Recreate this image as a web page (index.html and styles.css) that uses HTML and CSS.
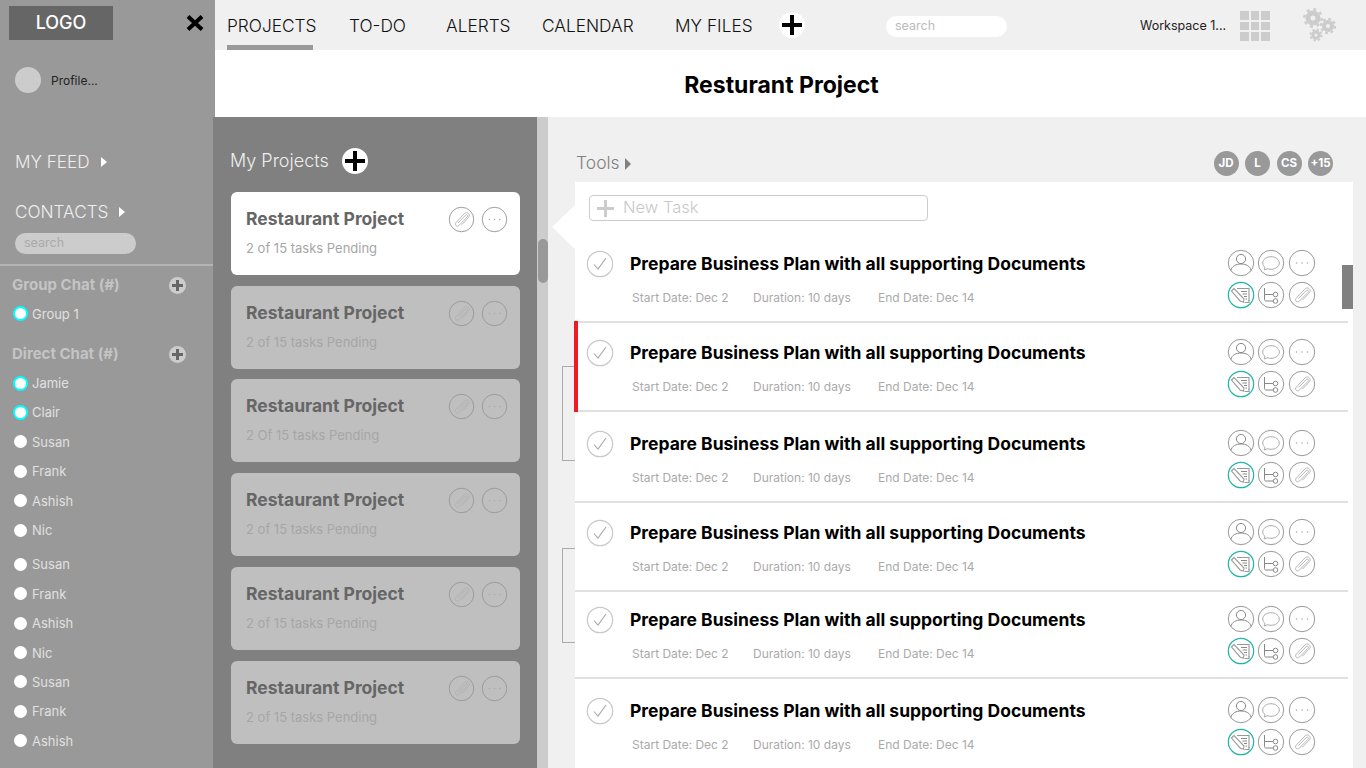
FILE: index.html
```html
<!DOCTYPE html>
<html lang="en">
<head>
    <meta charset="UTF-8">
    <title>Resturant Project</title>
    <link rel="stylesheet" href="styles.css">
</head>
<body>
    <svg class="sprite" width="0" height="0">
        <symbol id="i-check" viewBox="0 0 28 28"><circle cx="14" cy="14" r="12.7" fill="none" stroke="#c9c9c9" stroke-width="1.2"/><path d="M8 14.500l4 4.500 8-11" fill="none" stroke="#a8a8a8" stroke-width="1.1"/></symbol>
        <symbol id="i-person" viewBox="0 0 28 28"><circle cx="14" cy="14" r="12.7" fill="none" stroke="#999" stroke-width="1"/><circle cx="14" cy="10" r="4.600" fill="none" stroke="#888" stroke-width="1"/><path d="M3.800 21.500c1.200-4.500 5.200-6.500 10.200-6.500s9 2 10.200 6.500" fill="none" stroke="#888" stroke-width="1"/></symbol>
        <symbol id="i-chat" viewBox="0 0 28 28"><circle cx="14" cy="14" r="12.7" fill="none" stroke="#999" stroke-width="1"/><path d="M8 18.500c-1.500-1.200-2.300-2.800-2.300-4.500 0-3.500 3.700-6.300 8.300-6.300s8.300 2.800 8.300 6.300-3.700 6.300-8.300 6.300c-1.300 0-2.500-.2-3.600-.6l-3.200 1.300z" fill="none" stroke="#aaa" stroke-width="1"/></symbol>
        <symbol id="i-dots" viewBox="0 0 28 28"><circle cx="14" cy="14" r="12.700" fill="none" stroke="#999" stroke-width="1"/><circle cx="8.500" cy="14" r=".8" fill="#aaa"/><circle cx="14" cy="14" r=".8" fill="#aaa"/><circle cx="19.500" cy="14" r=".8" fill="#aaa"/></symbol>
        <symbol id="i-edit" viewBox="0 0 28 28"><circle cx="14" cy="14" r="12.700" fill="none" stroke="#1fb5a6" stroke-width="1.200"/><path d="M10 7.500h12v12.500" fill="none" stroke="#999" stroke-width="1.100"/><path d="M14 10.500h6M15.500 13h4.500M17 15.500h3M18.500 18h1.500" stroke="#888" stroke-width="1"/><path d="M4.500 10l2.500-2.500 10 10.500-.5 3-3.200-.8z" fill="#fff" stroke="#999" stroke-width="1.100"/><path d="M17.500 21.500h4.500v-2.500" fill="none" stroke="#999" stroke-width="1.100"/></symbol>
        <symbol id="i-flow" viewBox="0 0 28 28"><circle cx="14" cy="14" r="12.700" fill="none" stroke="#999" stroke-width="1"/><path d="M7.500 7v11.500c0 1 .5 1.500 1.500 1.500h7M7.500 13.500h8.500" fill="none" stroke="#888" stroke-width="1"/><circle cx="18.500" cy="13.500" r="2.300" fill="none" stroke="#888" stroke-width="1"/><circle cx="18.500" cy="20" r="2.300" fill="none" stroke="#888" stroke-width="1"/></symbol>
        <symbol id="i-clip" viewBox="0 0 28 28"><circle cx="14" cy="14" r="12.700" fill="none" stroke="#999" stroke-width="1"/><path d="M10.500 17.500l7.800-8c1.200-1.200 3 .3 1.800 1.700l-8.800 9c-2.200 2-5-.8-3.100-3l8.800-9.300c3-2.800 7 1.200 4.300 4l-7 7.400" fill="none" stroke="#b0b0b0" stroke-width=".9"/></symbol>
    </svg>

    <aside class="sidebar">
        <div class="logo-row">
            <div class="logo">LOGO</div>
            <svg class="close-x" width="18" height="16" viewBox="0 0 18 16"><path d="M2 1.500l14 13M16 1.500l-14 13" stroke="#000" stroke-width="4"/></svg>
        </div>
        <div class="profile">
            <span class="profile-pic"></span>
            <span>Profile...</span>
        </div>
        <a class="side-link side-link-feed">MY FEED <i class="arrow"></i></a>
        <a class="side-link side-link-contacts">CONTACTS <i class="arrow"></i></a>
        <div class="side-search">search</div>
        <div class="side-divider"></div>

        <div class="chat-head">
            <span>Group Chat (#)</span>
            <span class="small-plus"></span>
        </div>
        <ul class="chat-list">
            <li class="online">Group 1</li>
        </ul>

        <div class="chat-head chat-head-direct">
            <span>Direct Chat (#)</span>
            <span class="small-plus"></span>
        </div>
        <ul class="chat-list">
            <li class="online">Jamie</li>
            <li class="online">Clair</li>
            <li>Susan</li>
            <li>Frank</li>
            <li>Ashish</li>
            <li>Nic</li>
        </ul>
        <ul class="chat-list chat-list-more">
            <li>Susan</li>
            <li>Frank</li>
            <li>Ashish</li>
            <li>Nic</li>
            <li>Susan</li>
            <li>Frank</li>
            <li>Ashish</li>
        </ul>
    </aside>

    <div class="content">
        <header class="topbar">
            <nav class="nav">
                <a class="nav-item active">PROJECTS</a>
                <a class="nav-item">TO-DO</a>
                <a class="nav-item">ALERTS</a>
                <a class="nav-item">CALENDAR</a>
                <a class="nav-item">MY FILES</a>
                <span class="big-plus"></span>
            </nav>
            <div class="top-search">search</div>
            <div class="workspace">Workspace 1...</div>
            <div class="apps">
                <span></span><span></span><span></span>
                <span></span><span></span><span></span>
                <span></span><span></span><span></span>
            </div>
            <svg class="gears" width="34" height="34" viewBox="0 0 34 34">
                <circle cx="10" cy="10" r="8.700" fill="none" stroke="#ccc" stroke-width="2.400" stroke-dasharray="3 3.830"/>
                <circle cx="10" cy="10" r="5" fill="none" stroke="#ccc" stroke-width="5"/>
                <circle cx="25" cy="18" r="7" fill="none" stroke="#ccc" stroke-width="2.200" stroke-dasharray="2.800 2.700"/>
                <circle cx="25" cy="18" r="4" fill="none" stroke="#ccc" stroke-width="4"/>
                <circle cx="13" cy="27" r="5.500" fill="none" stroke="#ccc" stroke-width="2" stroke-dasharray="2.200 2.120"/>
                <circle cx="13" cy="27" r="3.100" fill="none" stroke="#ccc" stroke-width="3.200"/>
            </svg>
        </header>
        <div class="title-band"><h1>Resturant Project</h1></div>

        <div class="workarea">
            <section class="projects">
                <div class="projects-head">
                    <h2>My Projects</h2>
                    <span class="big-plus"></span>
                </div>
                <div class="project-list">
                    <div class="project-card selected">
                        <div class="project-top">
                            <h3>Restaurant Project</h3>
                            <svg class="ic"><use href="#i-clip"/></svg>
                            <svg class="ic"><use href="#i-dots"/></svg>
                        </div>
                        <p>2 of 15 tasks Pending</p>
                    </div>
                    <div class="project-card">
                        <div class="project-top">
                            <h3>Restaurant Project</h3>
                            <svg class="ic"><use href="#i-clip"/></svg>
                            <svg class="ic"><use href="#i-dots"/></svg>
                        </div>
                        <p>2 of 15 tasks Pending</p>
                    </div>
                    <div class="project-card">
                        <div class="project-top">
                            <h3>Restaurant Project</h3>
                            <svg class="ic"><use href="#i-clip"/></svg>
                            <svg class="ic"><use href="#i-dots"/></svg>
                        </div>
                        <p>2 Of 15 tasks Pending</p>
                    </div>
                    <div class="project-card">
                        <div class="project-top">
                            <h3>Restaurant Project</h3>
                            <svg class="ic"><use href="#i-clip"/></svg>
                            <svg class="ic"><use href="#i-dots"/></svg>
                        </div>
                        <p>2 of 15 tasks Pending</p>
                    </div>
                    <div class="project-card">
                        <div class="project-top">
                            <h3>Restaurant Project</h3>
                            <svg class="ic"><use href="#i-clip"/></svg>
                            <svg class="ic"><use href="#i-dots"/></svg>
                        </div>
                        <p>2 of 15 tasks Pending</p>
                    </div>
                    <div class="project-card">
                        <div class="project-top">
                            <h3>Restaurant Project</h3>
                            <svg class="ic"><use href="#i-clip"/></svg>
                            <svg class="ic"><use href="#i-dots"/></svg>
                        </div>
                        <p>2 of 15 tasks Pending</p>
                    </div>
                </div>
            </section>

            <div class="col-scroll"><span class="col-thumb"></span></div>

            <section class="tasks">
                <span class="bracket bracket-one"></span>
                <span class="bracket bracket-two"></span>
                <div class="tasks-head">
                    <div class="tools">Tools <i class="arrow arrow-dark"></i></div>
                    <div class="avatars">
                        <span>JD</span><span>L</span><span>CS</span><span>+15</span>
                    </div>
                </div>
                <div class="panel">
                    <span class="notch"></span>
                    <span class="panel-thumb"></span>
                    <div class="new-task"><span class="new-plus"></span><span class="new-label">New Task</span></div>
                    <div class="task-list">
                        <div class="task">
                            <svg class="check"><use href="#i-check"/></svg>
                            <div class="task-body">
                                <h4>Prepare Business Plan with all supporting Documents</h4>
                                <div class="meta"><span>Start Date: Dec 2</span><span>Duration: 10 days</span><span>End Date: Dec 14</span></div>
                            </div>
                            <div class="task-icons">
                                <svg class="ic"><use href="#i-person"/></svg>
                                <svg class="ic"><use href="#i-chat"/></svg>
                                <svg class="ic"><use href="#i-dots"/></svg>
                                <svg class="ic"><use href="#i-edit"/></svg>
                                <svg class="ic"><use href="#i-flow"/></svg>
                                <svg class="ic"><use href="#i-clip"/></svg>
                            </div>
                        </div>
                        <div class="task flagged">
                            <svg class="check"><use href="#i-check"/></svg>
                            <div class="task-body">
                                <h4>Prepare Business Plan with all supporting Documents</h4>
                                <div class="meta"><span>Start Date: Dec 2</span><span>Duration: 10 days</span><span>End Date: Dec 14</span></div>
                            </div>
                            <div class="task-icons">
                                <svg class="ic"><use href="#i-person"/></svg>
                                <svg class="ic"><use href="#i-chat"/></svg>
                                <svg class="ic"><use href="#i-dots"/></svg>
                                <svg class="ic"><use href="#i-edit"/></svg>
                                <svg class="ic"><use href="#i-flow"/></svg>
                                <svg class="ic"><use href="#i-clip"/></svg>
                            </div>
                        </div>
                        <div class="task">
                            <svg class="check"><use href="#i-check"/></svg>
                            <div class="task-body">
                                <h4>Prepare Business Plan with all supporting Documents</h4>
                                <div class="meta"><span>Start Date: Dec 2</span><span>Duration: 10 days</span><span>End Date: Dec 14</span></div>
                            </div>
                            <div class="task-icons">
                                <svg class="ic"><use href="#i-person"/></svg>
                                <svg class="ic"><use href="#i-chat"/></svg>
                                <svg class="ic"><use href="#i-dots"/></svg>
                                <svg class="ic"><use href="#i-edit"/></svg>
                                <svg class="ic"><use href="#i-flow"/></svg>
                                <svg class="ic"><use href="#i-clip"/></svg>
                            </div>
                        </div>
                        <div class="task">
                            <svg class="check"><use href="#i-check"/></svg>
                            <div class="task-body">
                                <h4>Prepare Business Plan with all supporting Documents</h4>
                                <div class="meta"><span>Start Date: Dec 2</span><span>Duration: 10 days</span><span>End Date: Dec 14</span></div>
                            </div>
                            <div class="task-icons">
                                <svg class="ic"><use href="#i-person"/></svg>
                                <svg class="ic"><use href="#i-chat"/></svg>
                                <svg class="ic"><use href="#i-dots"/></svg>
                                <svg class="ic"><use href="#i-edit"/></svg>
                                <svg class="ic"><use href="#i-flow"/></svg>
                                <svg class="ic"><use href="#i-clip"/></svg>
                            </div>
                        </div>
                        <div class="task">
                            <svg class="check"><use href="#i-check"/></svg>
                            <div class="task-body">
                                <h4>Prepare Business Plan with all supporting Documents</h4>
                                <div class="meta"><span>Start Date: Dec 2</span><span>Duration: 10 days</span><span>End Date: Dec 14</span></div>
                            </div>
                            <div class="task-icons">
                                <svg class="ic"><use href="#i-person"/></svg>
                                <svg class="ic"><use href="#i-chat"/></svg>
                                <svg class="ic"><use href="#i-dots"/></svg>
                                <svg class="ic"><use href="#i-edit"/></svg>
                                <svg class="ic"><use href="#i-flow"/></svg>
                                <svg class="ic"><use href="#i-clip"/></svg>
                            </div>
                        </div>
                        <div class="task">
                            <svg class="check"><use href="#i-check"/></svg>
                            <div class="task-body">
                                <h4>Prepare Business Plan with all supporting Documents</h4>
                                <div class="meta"><span>Start Date: Dec 2</span><span>Duration: 10 days</span><span>End Date: Dec 14</span></div>
                            </div>
                            <div class="task-icons">
                                <svg class="ic"><use href="#i-person"/></svg>
                                <svg class="ic"><use href="#i-chat"/></svg>
                                <svg class="ic"><use href="#i-dots"/></svg>
                                <svg class="ic"><use href="#i-edit"/></svg>
                                <svg class="ic"><use href="#i-flow"/></svg>
                                <svg class="ic"><use href="#i-clip"/></svg>
                            </div>
                        </div>
                    </div>
                </div>
            </section>
        </div>
    </div>
</body>
</html>
```

FILE: styles.css
```css
/* Page */
* {
    box-sizing: border-box;
}

html, body {
    height: 768px;
    overflow: hidden;
}

body {
    margin: 0;
    display: flex;
    font-family: "Inter", "Liberation Sans", sans-serif;
    background-color: #f0f0f0;
}

h1, h2, h3, h4, p, ul {
    margin: 0;
    padding: 0;
}

.sprite {
    position: absolute;
}

.ic {
    width: 28px;
    height: 28px;
    display: block;
}

/* Sidebar */
.sidebar {
    width: 213px;
    flex: none;
    height: 768px;
    background-color: #999;
    color: #e6e6e6;
}

.logo-row {
    display: flex;
    align-items: center;
    justify-content: space-between;
    padding: 6px 9px 0;
}

.logo {
    width: 104px;
    height: 34px;
    background-color: #666;
    color: #fff;
    font-size: 18px;
    font-weight: 500;
    line-height: 33px;
    text-align: center;
}

.close-x {
    margin-top: -1px;
}

.profile {
    display: flex;
    align-items: center;
    gap: 10px;
    margin: 27px 0 0 15px;
    font-size: 12px;
    color: #222;
}

.profile-pic {
    width: 26px;
    height: 26px;
    border-radius: 50%;
    background-color: #ccc;
}

.side-link {
    display: block;
    margin-left: 15px;
    font-size: 17.200px;
    font-weight: 300;
    line-height: 24px;
    color: #eee;
}

.side-link-feed {
    margin-top: 57px;
}

.side-link-contacts {
    margin-top: 26px;
}

.arrow {
    display: inline-block;
    margin-left: 6px;
    vertical-align: 1px;
    border-left: 6px solid #fff;
    border-top: 5.500px solid transparent;
    border-bottom: 5.500px solid transparent;
}

.arrow-dark {
    border-left-color: #808080;
    border-top-width: 6px;
    border-bottom-width: 6px;
    margin-left: 0;
    vertical-align: -1px;
}

.side-search {
    width: 121px;
    height: 21px;
    margin: 9px 0 0 15px;
    padding-left: 9px;
    border-radius: 11px;
    background-color: #ccc;
    color: #aaa;
    font-size: 12.500px;
    line-height: 20px;
}

.side-divider {
    height: 2px;
    margin-top: 10px;
    background-color: #b3b3b3;
}

.chat-head {
    display: flex;
    align-items: center;
    justify-content: space-between;
    padding: 10px 27px 0 12px;
    font-size: 15px;
    font-weight: 700;
    line-height: 18px;
    color: #c4c4c4;
}

.chat-head-direct {
    padding-top: 17px;
}

.small-plus {
    position: relative;
    width: 17px;
    height: 17px;
    border-radius: 50%;
    background-color: #ccc;
}

.small-plus::before,
.small-plus::after,
.big-plus::before,
.big-plus::after {
    content: "";
    position: absolute;
    background-color: #666;
}

.small-plus::before {
    left: 3px;
    top: 7px;
    width: 11px;
    height: 3px;
}

.small-plus::after {
    left: 7px;
    top: 3px;
    width: 3px;
    height: 11px;
}

.chat-list {
    list-style: none;
    margin-top: 5px;
    padding-left: 14px;
}

.chat-list li {
    display: flex;
    align-items: center;
    gap: 5px;
    height: 29.400px;
    font-size: 13px;
    color: #e0e0e0;
}

.chat-list li::before {
    content: "";
    width: 13px;
    height: 13px;
    border-radius: 50%;
    background-color: #fff;
}

.chat-list li.online::before {
    width: 11px;
    height: 11px;
    margin: 0 -1px;
    border: 2px solid #00ffff;
}

.chat-list-more {
    margin-top: 5px;
}

/* Right side: top bar + title + columns */
.content {
    flex: 1;
    min-width: 0;
    display: flex;
    flex-direction: column;
}

.topbar {
    height: 50px;
    display: flex;
    align-items: stretch;
    border-left: 2px solid #999;
    background-color: #f0f0f0;
}

.nav {
    display: grid;
    grid-template-columns: 122px 97px 96px 133px 104px 26px;
    align-items: stretch;
    justify-items: start;
    width: 671px;
    padding-left: 12px;
}

.nav-item {
    height: 50px;
    padding-top: 15px;
    font-size: 17.300px;
    font-weight: 300;
    line-height: 22px;
    white-space: nowrap;
    color: #111;
}

.nav-item.active {
    width: 86px;
    border-bottom: 5px solid #999;
}

.big-plus {
    position: relative;
    flex: none;
    width: 26px;
    height: 26px;
    border-radius: 50%;
    background-color: #fff;
}

.nav .big-plus {
    align-self: center;
}

.big-plus::before {
    left: 3px;
    top: 11px;
    width: 20px;
    height: 4px;
    background-color: #000;
}

.big-plus::after {
    left: 11px;
    top: 3px;
    width: 4px;
    height: 20px;
    background-color: #000;
}

.top-search {
    align-self: flex-start;
    width: 121px;
    height: 21px;
    margin-top: 16px;
    padding-left: 9px;
    border-radius: 11px;
    background-color: #fff;
    color: #bbb;
    font-size: 12.500px;
    line-height: 20px;
}

.workspace {
    margin-left: 133px;
    padding-top: 18px;
    width: 100px;
    font-size: 12.500px;
    color: #222;
}

.apps {
    display: grid;
    grid-template-columns: repeat(3, 8.500px);
    grid-template-rows: repeat(3, 8.500px);
    gap: 2px;
    margin-top: 11px;
    height: 30px;
}

.apps span {
    background-color: #ccc;
}

.gears {
    margin: 8px 0 0 33px;
}

.title-band {
    height: 67px;
    border-left: 2px solid #999;
    background-color: #fff;
    padding-right: 18px;
    text-align: center;
}

.title-band h1 {
    font-size: 23px;
    font-weight: 700;
    line-height: 70px;
    color: #000;
}

.workarea {
    flex: 1;
    display: flex;
    min-height: 0;
}

/* Projects column */
.projects {
    width: 324px;
    flex: none;
    background-color: #808080;
    padding: 31px 17px 0 18px;
}

.projects-head {
    display: flex;
    align-items: center;
    gap: 13px;
    height: 26px;
    margin-bottom: 18px;
}

.projects-head h2 {
    margin-left: -1px;
    padding-bottom: 2px;
    font-size: 18px;
    font-weight: 300;
    color: #eee;
}

.project-list {
    display: flex;
    flex-direction: column;
    gap: 10.720px;
}

.project-card {
    height: 83px;
    padding: 14px 12px 0 15px;
    border-radius: 6px;
    background-color: #bfbfbf;
}

.project-card.selected {
    background-color: #fff;
}

.project-top {
    display: flex;
    align-items: center;
    gap: 6px;
}

.project-card h3 {
    flex: 1;
    padding-bottom: 2px;
    font-size: 17.500px;
    font-weight: 700;
    color: #666;
}

.project-card p {
    margin-top: 7px;
    font-size: 13px;
    color: #a6a6a6;
}

.project-card .ic {
    width: 27px;
    height: 27px;
}

/* Thin scrollbar between columns */
.col-scroll {
    width: 11px;
    flex: none;
    background-color: #ccc;
    padding-top: 122px;
}

.col-thumb {
    display: block;
    width: 10px;
    height: 44px;
    margin-left: 1px;
    border-radius: 5px;
    background-color: #999;
}

/* Tasks column */
.tasks {
    position: relative;
    flex: 1;
    min-width: 0;
    padding: 0 13px 0 27px;
}

.bracket {
    position: absolute;
    left: 14px;
    width: 14px;
    height: 95px;
    border: 1px solid #aaa;
    border-right: 0;
}

.bracket-one {
    top: 249px;
}

.bracket-two {
    top: 431px;
}

.tasks-head {
    display: flex;
    align-items: center;
    justify-content: space-between;
    height: 65px;
    padding: 28px 20px 0 2px;
}

.tools {
    margin-top: -2px;
    margin-left: -1px;
    font-size: 17.500px;
    font-weight: 300;
    color: #808080;
}

.avatars {
    display: flex;
    gap: 6.500px;
}

.avatars span {
    width: 25px;
    height: 25px;
    border-radius: 50%;
    background-color: #999;
    color: #fff;
    font-size: 11.500px;
    font-weight: 700;
    line-height: 25px;
    text-align: center;
}

.panel {
    position: relative;
    height: 586px;
    background-color: #fff;
    padding-top: 13px;
}

.notch {
    position: absolute;
    left: -23px;
    top: 23px;
    border-right: 23px solid #fff;
    border-top: 22px solid transparent;
    border-bottom: 22px solid transparent;
}

.panel-thumb {
    position: absolute;
    right: 0;
    top: 83px;
    width: 11px;
    height: 44px;
    background-color: #808080;
}

.new-task {
    display: flex;
    align-items: center;
    gap: 9px;
    width: 339px;
    height: 26px;
    margin-left: 14px;
    padding-left: 7px;
    border: 1px solid #ccc;
    border-radius: 4px;
    font-size: 16.500px;
    font-weight: 300;
    color: #c8c8c8;
}

.new-label {
    padding-bottom: 2px;
}

.new-plus {
    width: 17px;
    height: 17px;
    background:
        linear-gradient(#ccc, #ccc) center / 17px 3px no-repeat,
        linear-gradient(#ccc, #ccc) center / 3px 17px no-repeat;
}

.task-list {
    display: grid;
    grid-template-rows: 89px 89px 91px 89px 87px 91px;
    margin: 13px 5px 0 0;
}

.task {
    position: relative;
    display: flex;
    align-items: flex-end;
    padding: 0 32.500px 16px 11px;
    border-bottom: 2px solid #e0e0e0;
}

.flagged::before {
    content: "";
    position: absolute;
    left: -1px;
    top: -2px;
    bottom: -2px;
    width: 4px;
    background-color: #ed1c24;
}

.check {
    width: 28px;
    height: 28px;
    flex: none;
    margin-bottom: 27px;
}

.task-body {
    flex: 1;
    margin-left: 16px;
}

.task-body h4 {
    font-size: 17.500px;
    font-weight: 700;
    line-height: 22px;
    color: #000;
}

.meta {
    display: flex;
    margin: 15px 0 0 2px;
    font-size: 12px;
    line-height: 15px;
    color: #aaa;
}

.meta span:nth-child(1) {
    width: 121px;
}

.meta span:nth-child(2) {
    width: 125px;
}

.task-icons {
    display: grid;
    grid-template-columns: repeat(3, 28px);
    grid-template-rows: repeat(2, 28px);
    column-gap: 2.500px;
    row-gap: 4px;
    margin-bottom: -4px;
}
```
